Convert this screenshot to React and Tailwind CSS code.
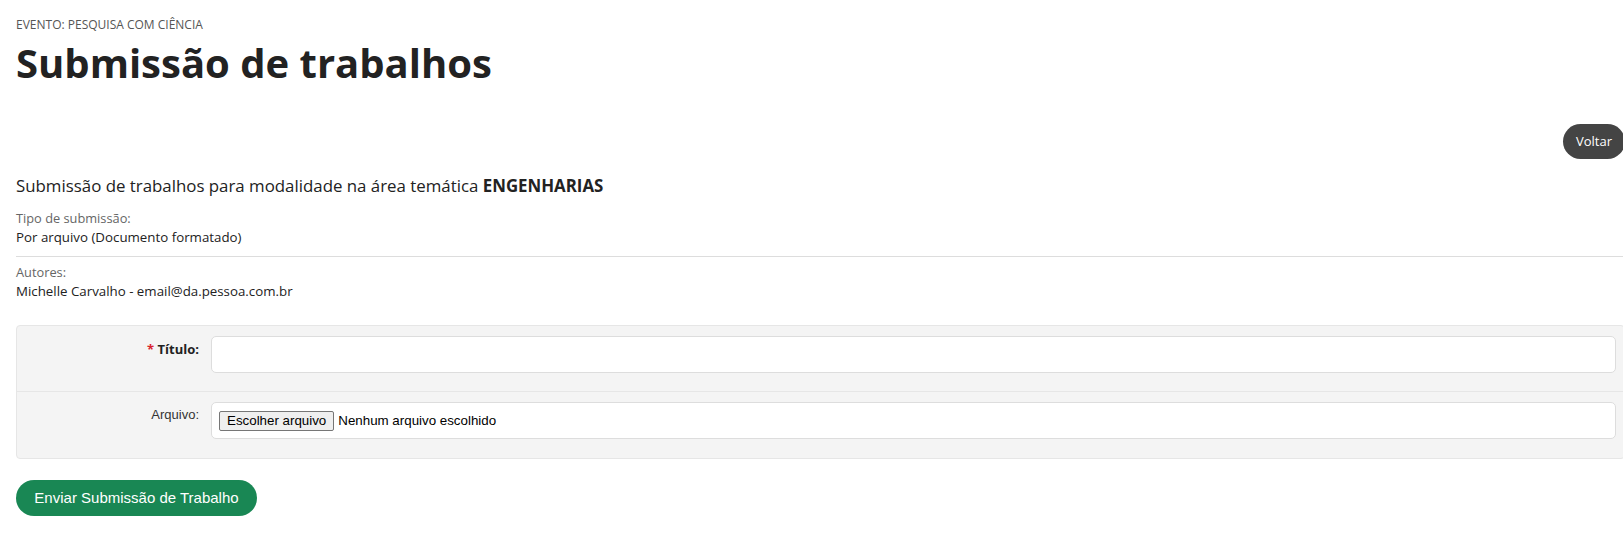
export default function App() {
  return (
    <div className="w-[1623px] h-[542px] overflow-hidden bg-white">
      <div className="ml-4 w-[1609px] font-['Open_Sans',sans-serif] text-[#212529]">
        <div className="pt-[17px] text-[12px] leading-[16px] text-[#555]">EVENTO: PESQUISA COM CIÊNCIA</div>
        <h1 className="mt-[6px] text-[40px] leading-[48px] font-bold text-[#222]">Submissão de trabalhos</h1>
        <div className="mt-[37px] flex justify-end">
          <button className="h-[35px] w-[62px] rounded-full bg-[#444] text-[13px] text-white">Voltar</button>
        </div>
        <div className="mt-[15px] text-[16.85px] leading-[24px] text-[#222]">
          Submissão de trabalhos para modalidade na área temática <b className="font-bold">ENGENHARIAS</b>
        </div>
        <div className="mt-[11px] text-[12.8px] leading-[18px] text-[#666]">Tipo de submissão:</div>
        <div className="mt-[1px] text-[13.3px] leading-[19px] text-[#222]">Por arquivo (Documento formatado)</div>
        <div className="mt-[9px] border-t border-[#ddd]" />
        <div className="mt-[6px] text-[12.8px] leading-[18px] text-[#666]">Autores:</div>
        <div className="mt-[1px] text-[13.3px] leading-[19px] text-[#222]">Michelle Carvalho - email@da.pessoa.com.br</div>
        <div className="mt-[24px] rounded-[4px] border border-[#e6e6e6] bg-[#f4f4f4]">
          <div className="flex items-start pt-[10px] pb-[18px] border-b border-[#e6e6e6]">
            <div className="w-[194px] shrink-0 pt-[4px] pr-[12px] text-right text-[13px] leading-[18px] font-bold text-[#222]">
              <span className="text-[#d9232d]">*</span> Título:
            </div>
            <div className="h-[37px] w-[1405px] rounded-[5px] border border-[#ddd] bg-white" />
          </div>
          <div className="flex items-start pt-[10px] pb-[19px]">
            <div className="w-[194px] shrink-0 pt-[4px] pr-[12px] text-right text-[13px] leading-[18px] font-['Liberation_Sans',Arial,sans-serif] text-[#333]">Arquivo:</div>
            <div className="flex h-[37px] w-[1405px] items-center rounded-[5px] border border-[#ddd] bg-white px-[7px] font-['Liberation_Sans',Arial,sans-serif] text-[13.33px] text-black">
              <span className="rounded-[2px] border border-[#767676] bg-[#efefef] px-[7px] py-[1px] leading-[16px]">Escolher arquivo</span>
              <span className="ml-[4px]">Nenhum arquivo escolhido</span>
            </div>
          </div>
        </div>
        <button className="mt-[21px] h-[36px] w-[241px] rounded-full bg-[#198754] font-['Liberation_Sans',Arial,sans-serif] text-[15px] text-white">Enviar Submissão de Trabalho</button>
      </div>
    </div>
  );
}
